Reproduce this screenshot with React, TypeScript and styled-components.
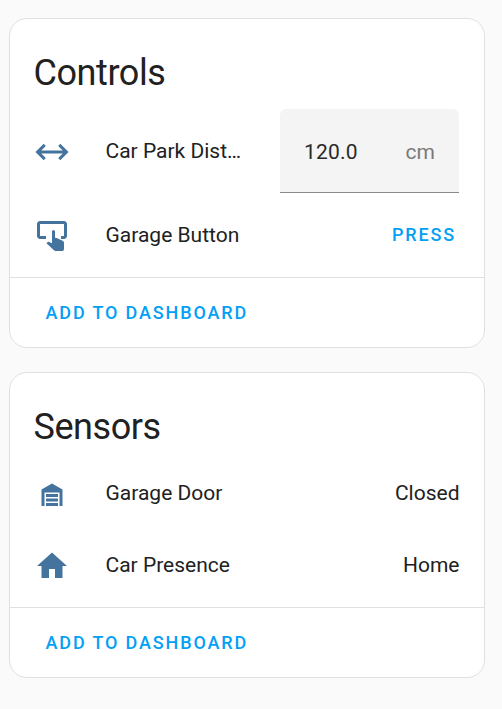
import React from "react";
import styled, { createGlobalStyle } from "styled-components";

const GlobalStyle = createGlobalStyle`
  * { box-sizing: border-box; }
  body { margin: 0; background: #fafafa; font-family: Roboto, sans-serif; color: #212121; }
`;

const Page = styled.main`
  display: flex;
  flex-direction: column;
  gap: 24px;
  padding: 18px 17px 31px 9px;
`;

const Card = styled.section`
  background: #fff;
  border: 1px solid #e0e0e0;
  border-radius: 18px;
`;

const Title = styled.h1`
  margin: 0;
  padding: 30px 24px 0 23.5px;
  font-size: 36px;
  font-weight: 400;
  line-height: 48px;
  letter-spacing: -0.432px;
`;

const Rows = styled.div<{ $top: number; $bottom: number }>`
  display: flex;
  flex-direction: column;
  padding: ${(p) => p.$top}px 25px ${(p) => p.$bottom}px 24px;
`;

const Row = styled.div<{ $height: number }>`
  display: flex;
  align-items: center;
  height: ${(p) => p.$height}px;
  font-size: 21px;
`;

const Icon = styled.svg`
  flex: none;
  width: 36px;
  height: 36px;
  margin: 2px 35.5px 0 0;
  fill: #44739e;
`;

const Name = styled.span`
  flex: 1;
  min-width: 0;
  overflow: hidden;
  text-overflow: ellipsis;
  white-space: nowrap;
`;

const State = styled.span`
  margin-right: -0.5px;
`;

const Field = styled.label`
  display: flex;
  align-items: center;
  flex: none;
  width: 179px;
  height: 84px;
  margin-left: 36px;
  padding: 2px 24px 0;
  border-bottom: 1px solid #8a8a8a;
  border-radius: 6px 6px 0 0;
  background: #f4f4f4;
`;

const Input = styled.input`
  flex: 1;
  min-width: 0;
  padding: 0;
  border: 0;
  background: transparent;
  color: #2a2a2a;
  font: inherit;
  letter-spacing: 0.197px;
`;

const Unit = styled.span`
  color: #7a7a7a;
`;

const Action = styled.button`
  padding: 0;
  border: 0;
  background: none;
  color: #03a0f4;
  font: 500 18px/24px Roboto, sans-serif;
  letter-spacing: 1.86px;
  text-transform: uppercase;
`;

const Press = styled(Action)`
  margin-right: 3px;
`;

const Footer = styled.footer`
  display: flex;
  align-items: center;
  height: 70px;
  padding: 0 35.5px;
  border-top: 1px solid #e0e0e0;
`;

const icons = {
  arrows: "M6.45,17.45L1,12L6.45,6.55L7.86,7.96L4.83,11H19.17L16.14,7.96L17.55,6.55L23,12L17.55,17.45L16.14,16.04L19.17,13H4.83L7.86,16.04L6.45,17.45Z",
  tap: "M20 2H4C2.9 2 2 2.9 2 4V12C2 13.11 2.9 14 4 14H8V12L4 12L4 4H20L20 12H18V14H20V13.98L20 14C21.11 14 22 13.11 22 12V4C22 2.9 21.11 2 20 2M12 9A1 1 0 0 1 14 9V13.2L15.1 13.3L19.1 15.1C19.7 15.4 20 15.9 20 16.5V20.6C20 21.4 19.4 22 18.6 22H14.4C14 22 13.6 21.8 13.3 21.5L8.3 16.9L9 16.2C9.2 16 9.5 15.9 9.8 15.9L12 16.9V9Z",
  garage: "M19,20H17V11H7V20H5V9L12,5L19,9V20M8,12H16V14H8V12M8,15H16V17H8V15M16,18V20H8V18H16Z",
  home: "M10,20V14H14V20H19V12H22L12,3L2,12H5V20H10Z",
};

const EntityIcon = ({ name }: { name: keyof typeof icons }) => (
  <Icon viewBox="0 0 24 24" aria-hidden="true"><path d={icons[name]} /></Icon>
);

const DashboardFooter = () => (
  <Footer><Action>Add to dashboard</Action></Footer>
);

export default function App() {
  return (
    <>
      <GlobalStyle />
      <Page>
        <Card>
          <Title>Controls</Title>
          <Rows $top={12} $bottom={0}>
            <Row $height={84}>
              <EntityIcon name="arrows" />
              <Name>Car Park Distance</Name>
              <Field>
                <Input defaultValue="120.0" aria-label="Car Park Distance" />
                <Unit>cm</Unit>
              </Field>
            </Row>
            <Row $height={84}>
              <EntityIcon name="tap" />
              <Name>Garage Button</Name>
              <Press>Press</Press>
            </Row>
          </Rows>
          <DashboardFooter />
        </Card>
        <Card>
          <Title>Sensors</Title>
          <Rows $top={6} $bottom={6}>
            <Row $height={72}>
              <EntityIcon name="garage" />
              <Name>Garage Door</Name>
              <State>Closed</State>
            </Row>
            <Row $height={72}>
              <EntityIcon name="home" />
              <Name>Car Presence</Name>
              <State>Home</State>
            </Row>
          </Rows>
          <DashboardFooter />
        </Card>
      </Page>
    </>
  );
}
